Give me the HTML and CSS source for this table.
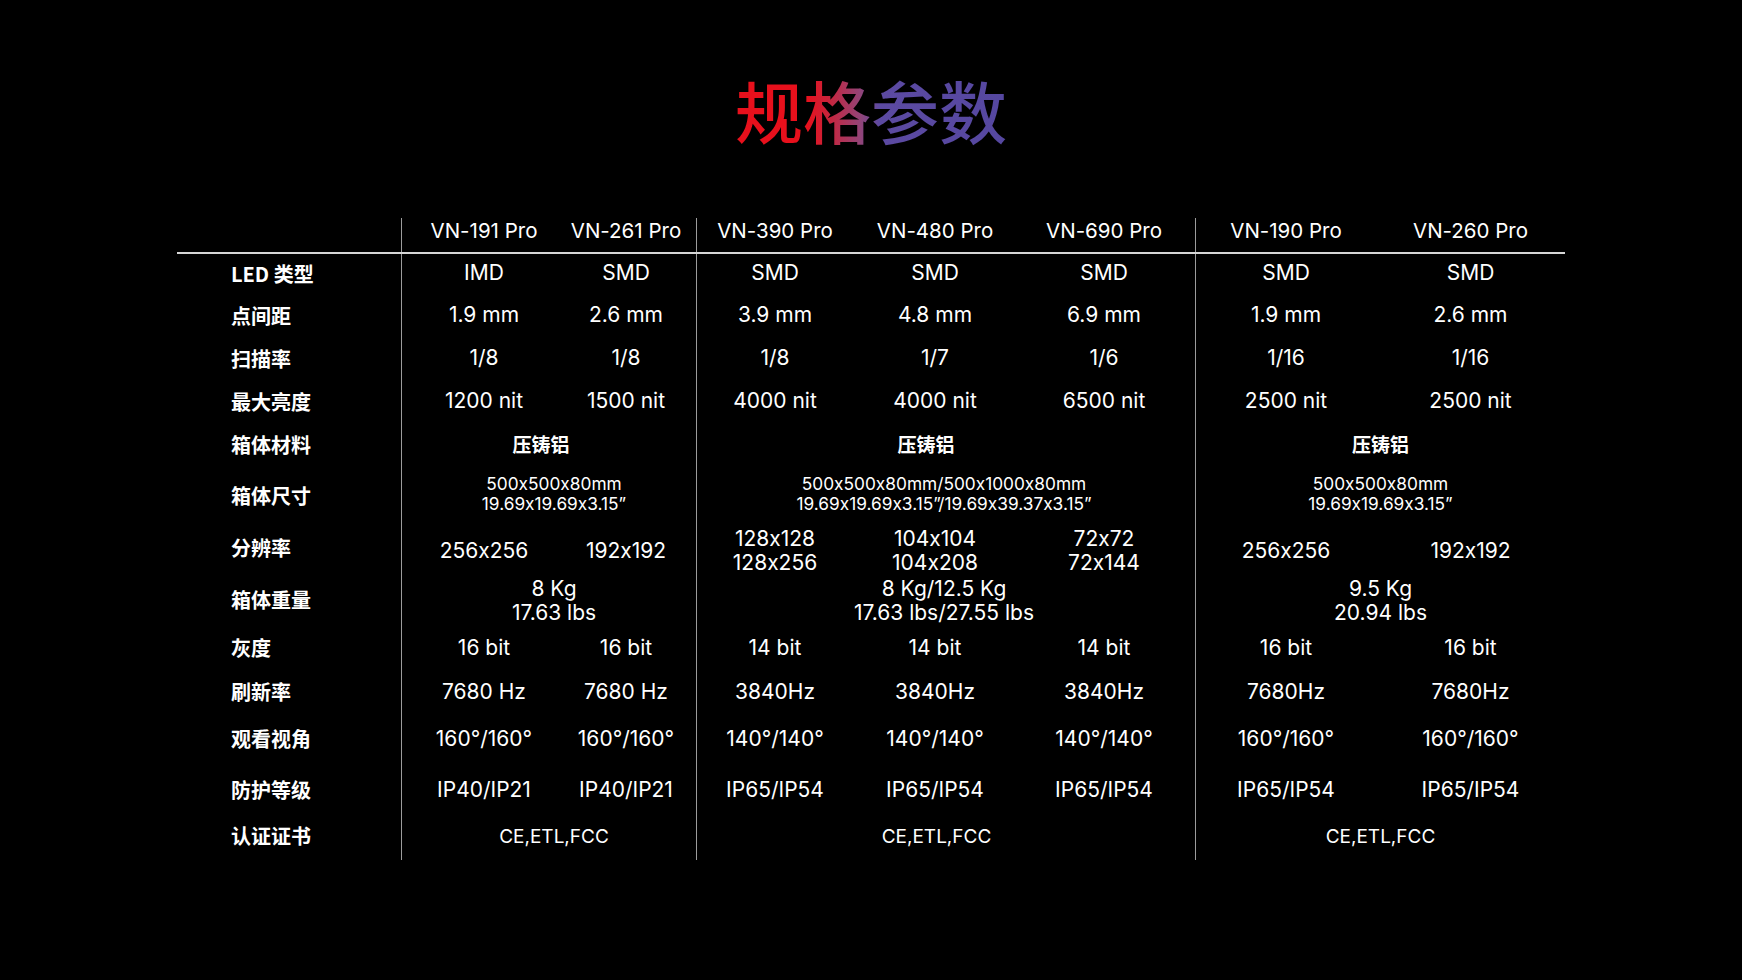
FILE: index.html
```html
<!DOCTYPE html>
<html lang="zh-CN">
<head>
<meta charset="utf-8">
<title>规格参数</title>
<link rel="stylesheet" href="styles.css">
</head>
<body>
<main class="page">
  <h1 class="title">规格参数</h1>
  <div class="spec">
    <div class="vline v1"></div>
    <div class="vline v2"></div>
    <div class="vline v3"></div>
    <div class="hr"></div>

    <div class="lbl"></div>
    <div class="cell head c1">VN-191 Pro</div>
    <div class="cell head c2">VN-261 Pro</div>
    <div class="cell head c3">VN-390 Pro</div>
    <div class="cell head c4">VN-480 Pro</div>
    <div class="cell head c5">VN-690 Pro</div>
    <div class="cell head c6">VN-190 Pro</div>
    <div class="cell head c7">VN-260 Pro</div>

    <div class="lbl">LED 类型</div>
    <div class="cell c1">IMD</div>
    <div class="cell c2">SMD</div>
    <div class="cell c3">SMD</div>
    <div class="cell c4">SMD</div>
    <div class="cell c5">SMD</div>
    <div class="cell c6">SMD</div>
    <div class="cell c7">SMD</div>

    <div class="lbl">点间距</div>
    <div class="cell c1">1.9 mm</div>
    <div class="cell c2">2.6 mm</div>
    <div class="cell c3">3.9 mm</div>
    <div class="cell c4">4.8 mm</div>
    <div class="cell c5">6.9 mm</div>
    <div class="cell c6">1.9 mm</div>
    <div class="cell c7">2.6 mm</div>

    <div class="lbl">扫描率</div>
    <div class="cell c1">1/8</div>
    <div class="cell c2">1/8</div>
    <div class="cell c3">1/8</div>
    <div class="cell c4">1/7</div>
    <div class="cell c5">1/6</div>
    <div class="cell c6">1/16</div>
    <div class="cell c7">1/16</div>

    <div class="lbl">最大亮度</div>
    <div class="cell c1">1200 nit</div>
    <div class="cell c2">1500 nit</div>
    <div class="cell c3">4000 nit</div>
    <div class="cell c4">4000 nit</div>
    <div class="cell c5">6500 nit</div>
    <div class="cell c6">2500 nit</div>
    <div class="cell c7">2500 nit</div>

    <div class="lbl up1">箱体材料</div>
    <div class="cell cjk g1 shift-a">压铸铝</div>
    <div class="cell cjk g2 shift-b">压铸铝</div>
    <div class="cell cjk g3">压铸铝</div>

    <div class="lbl up2">箱体尺寸</div>
    <div class="cell dim g1"><span>500x500x80mm</span><span>19.69x19.69x3.15”</span></div>
    <div class="cell dim g2"><span>500x500x80mm/500x1000x80mm</span><span>19.69x19.69x3.15”/19.69x39.37x3.15”</span></div>
    <div class="cell dim g3"><span>500x500x80mm</span><span>19.69x19.69x3.15”</span></div>

    <div class="lbl up4">分辨率</div>
    <div class="cell c1">256x256</div>
    <div class="cell c2">192x192</div>
    <div class="cell two c3"><span>128x128</span><span>128x256</span></div>
    <div class="cell two c4"><span>104x104</span><span>104x208</span></div>
    <div class="cell two c5"><span>72x72</span><span>72x144</span></div>
    <div class="cell c6">256x256</div>
    <div class="cell c7">192x192</div>

    <div class="lbl up2">箱体重量</div>
    <div class="cell two g1"><span>8 Kg</span><span>17.63 lbs</span></div>
    <div class="cell two g2"><span>8 Kg/12.5 Kg</span><span>17.63 lbs/27.55 lbs</span></div>
    <div class="cell two g3"><span>9.5 Kg</span><span>20.94 lbs</span></div>

    <div class="lbl up1">灰度</div>
    <div class="cell c1">16 bit</div>
    <div class="cell c2">16 bit</div>
    <div class="cell c3">14 bit</div>
    <div class="cell c4">14 bit</div>
    <div class="cell c5">14 bit</div>
    <div class="cell c6">16 bit</div>
    <div class="cell c7">16 bit</div>

    <div class="lbl up1">刷新率</div>
    <div class="cell c1">7680 Hz</div>
    <div class="cell c2">7680 Hz</div>
    <div class="cell c3">3840Hz</div>
    <div class="cell c4">3840Hz</div>
    <div class="cell c5">3840Hz</div>
    <div class="cell c6">7680Hz</div>
    <div class="cell c7">7680Hz</div>

    <div class="lbl up1">观看视角</div>
    <div class="cell c1">160°/160°</div>
    <div class="cell c2">160°/160°</div>
    <div class="cell c3">140°/140°</div>
    <div class="cell c4">140°/140°</div>
    <div class="cell c5">140°/140°</div>
    <div class="cell c6">160°/160°</div>
    <div class="cell c7">160°/160°</div>

    <div class="lbl up1">防护等级</div>
    <div class="cell c1">IP40/IP21</div>
    <div class="cell c2">IP40/IP21</div>
    <div class="cell c3">IP65/IP54</div>
    <div class="cell c4">IP65/IP54</div>
    <div class="cell c5">IP65/IP54</div>
    <div class="cell c6">IP65/IP54</div>
    <div class="cell c7">IP65/IP54</div>

    <div class="lbl up2">认证证书</div>
    <div class="cell cert g1">CE,ETL,FCC</div>
    <div class="cell cert g2 shift-c">CE,ETL,FCC</div>
    <div class="cell cert g3">CE,ETL,FCC</div>
  </div>
</main>
</body>
</html>
```

FILE: styles.css
```css
html, body {
  margin: 0;
  padding: 0;
  background: #000;
}

.page {
  width: 1742px;
  height: 980px;
  overflow: hidden;
  background: #000;
  color: #fff;
  font-family: "Inter", "Noto Sans CJK SC", sans-serif;
  font-feature-settings: "calt" 0;
}

.title {
  margin: 0 auto;
  padding-top: 70px;
  width: 280px;
  height: 80px;
  line-height: 80px;
  text-align: center;
  font-family: "Noto Sans CJK SC", sans-serif;
  font-size: 68px;
  font-weight: 500;
  background: linear-gradient(90deg, #e8101c 0%, #e8101c 27%, #c8243c 35%, #944477 46%, #5c4aa2 53%, #5547a0 100%);
  -webkit-background-clip: text;
  background-clip: text;
  color: transparent;
}

.spec {
  margin: 60px auto 0;
  width: 1388px;
  display: grid;
  grid-template-columns: 224px 1px 10px 144px 140px 1px 156px 164px 174px 4px 1px 180px 189px;
  grid-template-rows: 42px 2px 40px 43px 43px 43px 45px 59px 50px 50px 43px 45px 50px 51px 44px 0px;
}

.vline {
  grid-row: 1 / -1;
  margin-top: 8px;
  background: #9c9c9c;
}
.v1 { grid-column: 2; }
.v2 { grid-column: 6; }
.v3 { grid-column: 11; }

.hr {
  grid-row: 2;
  grid-column: 1 / -1;
  background: #d6d6d6;
}

.lbl {
  grid-column: 1;
  display: flex;
  align-items: center;
  padding-left: 54px;
  font-family: "Noto Sans CJK SC", sans-serif;
  font-weight: 700;
  font-size: 20px;
  line-height: 24px;
}
.up1 { padding-bottom: 2px; }
.up2 { padding-bottom: 4px; }
.up4 { padding-bottom: 8px; }

.cell {
  display: flex;
  flex-direction: column;
  align-items: center;
  justify-content: center;
  text-align: center;
  font-size: 21px;
  line-height: 24px;
  white-space: nowrap;
  padding-bottom: 2px;
}

.head { font-size: 20.5px; padding-bottom: 0; }

.c1 { grid-column: 4; }
.c2 { grid-column: 5; }
.c3 { grid-column: 7; }
.c4 { grid-column: 8; }
.c5 { grid-column: 9; }
.c6 { grid-column: 12; }
.c7 { grid-column: 13; }
.g1 { grid-column: 4 / 6; }
.g2 { grid-column: 7 / 10; }
.g3 { grid-column: 12 / 14; }

.cjk {
  font-family: "Noto Sans CJK SC", sans-serif;
  font-weight: 700;
  font-size: 19px;
  padding-bottom: 4px;
}

.dim {
  font-size: 17.3px;
  line-height: 20px;
  padding-bottom: 7px;
}

.two { line-height: 24.5px; }

.cert { font-size: 19px; }

.shift-a { padding-right: 26px; }
.shift-b { padding-right: 36px; }
.shift-c { padding-right: 15px; }
```
